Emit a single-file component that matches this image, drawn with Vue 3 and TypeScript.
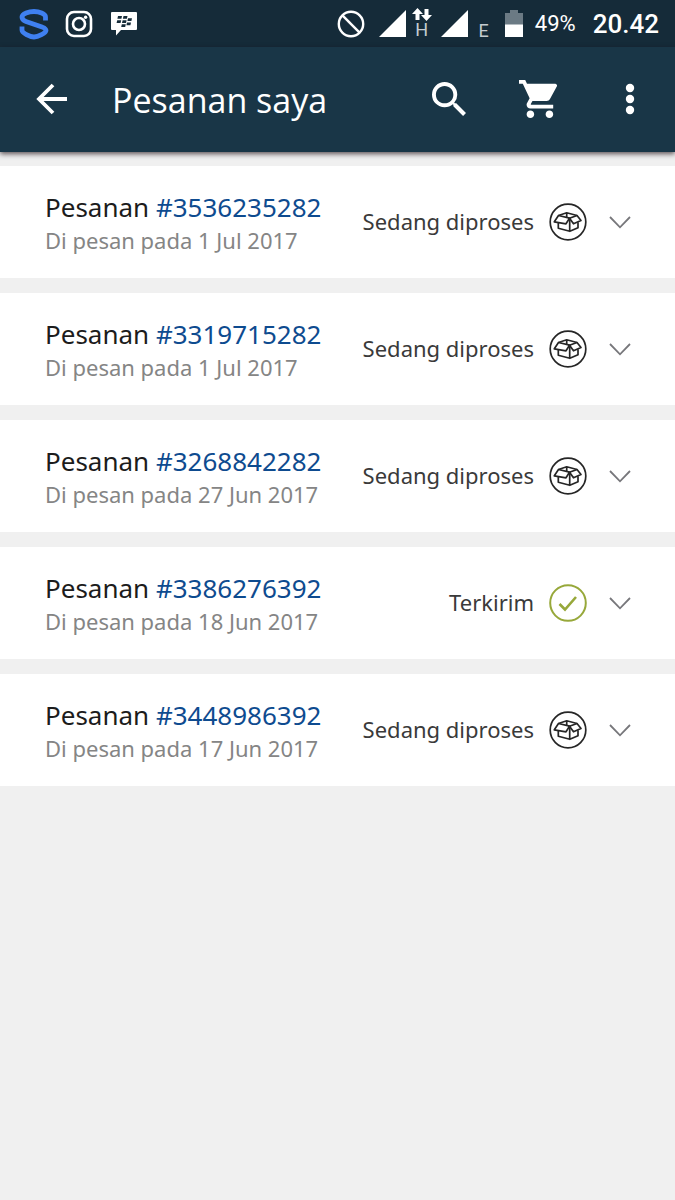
<script setup lang="ts">
import { ref } from 'vue'

interface Order {
  id: string
  date: string
  status: string
  delivered: boolean
}

const orders: Order[] = [
  { id: '3536235282', date: '1 Jul 2017', status: 'Sedang diproses', delivered: false },
  { id: '3319715282', date: '1 Jul 2017', status: 'Sedang diproses', delivered: false },
  { id: '3268842282', date: '27 Jun 2017', status: 'Sedang diproses', delivered: false },
  { id: '3386276392', date: '18 Jun 2017', status: 'Terkirim', delivered: true },
  { id: '3448986392', date: '17 Jun 2017', status: 'Sedang diproses', delivered: false },
]

const expanded = ref<string | null>(null)

function toggle(id: string): void {
  expanded.value = expanded.value === id ? null : id
}
</script>

<template>
  <div class="screen">
    <div class="statusbar">
      <div class="notifications">
        <svg width="30" height="32" viewBox="0 0 30 32" fill="none" stroke="#3f80f0" stroke-width="4.8" stroke-linejoin="round">
          <path d="M26.500 12.500V9C26.500 5.500 20 3.500 15 3.500S3 5.500 3 9C3 11.500 4.500 12.500 7 13.500L23 19C25.500 20 27 20.500 27 22.500C27 25 19 29 15 29S3 25 3 22V18.500" />
        </svg>
        <svg width="28" height="28" viewBox="0 0 28 28" fill="none" stroke="#fff" stroke-width="2.6">
          <rect x="2" y="2" width="24" height="24" rx="7" />
          <circle cx="14" cy="14" r="6" />
          <circle cx="20.6" cy="7.2" r="1.7" fill="#fff" stroke="none" />
        </svg>
        <svg width="26" height="24" viewBox="0 0 26 24">
          <path fill="#fff" d="M1 0H25Q26 0 26 1V17Q26 18 25 18H10L5 23.500V18H1Q0 18 0 17V1Q0 0 1 0Z" />
          <g fill="#152b39">
            <path d="M7 4h4l-.6 2.700h-4zM12.500 4h4l-.6 2.700h-4zM6.200 8.300h4l-.6 2.700h-4zM11.600 8.300h4l-.6 2.700h-4zM17 6.200h4l-.6 2.700h-4zM16 10.500h4l-.6 2.700h-4zM10.800 12.300h4l-.6 2.700h-4z" />
          </g>
        </svg>
      </div>
      <div class="system">
        <svg width="28" height="28" viewBox="0 0 28 28" fill="none" stroke="#fff" stroke-width="2.400">
          <circle cx="14" cy="14" r="12.200" />
          <path d="M5.400 5.400L22.600 22.600" />
        </svg>
        <svg class="signal" width="27" height="27" viewBox="0 0 27 27"><path fill="#fff" d="M27 0V27H0Z" /></svg>
        <span class="network">
          <svg width="20" height="13" viewBox="0 0 20 13" fill="#fff">
            <path d="M5.500 0L11 6H7.500V12H3.500V6H0Z" />
            <path d="M14.500 13L9 7H12.500V1H16.500V7H20Z" />
          </svg>
          <span class="net-label">H</span>
        </span>
        <svg class="signal second" width="27" height="27" viewBox="0 0 27 27"><path fill="#fff" d="M27 0V27H0Z" /></svg>
        <span class="net-label edge">E</span>
        <svg class="battery" width="18" height="27" viewBox="0 0 18 27">
          <path fill="#6b7a84" d="M5 0H13V3H18V15H0V3H5Z" />
          <path fill="#fff" d="M0 14.500H18V27H0Z" />
        </svg>
        <span class="percent">49%</span>
        <span class="clock">20.42</span>
      </div>
    </div>

    <header class="appbar">
      <button class="icon-btn back" type="button" aria-label="Kembali">
        <svg width="32" height="32" viewBox="0 0 32 32" fill="none" stroke="#fff" stroke-width="3.800">
          <path d="M31 16H4M17 2L3 16L17 30" />
        </svg>
      </button>
      <h1>Pesanan saya</h1>
      <button class="icon-btn search" type="button" aria-label="Cari">
        <svg width="34" height="34" viewBox="3 3 17.500 17.500" fill="#fff">
          <path d="M15.500 14h-.79l-.28-.27A6.471 6.471 0 0 0 16 9.500 6.500 6.500 0 1 0 9.500 16c1.610 0 3.090-.59 4.230-1.570l.27.28v.79l5 4.990L20.490 19l-4.990-5zm-6 0C7.010 14 5 11.990 5 9.500S7.010 5 9.500 5 14 7.010 14 9.500 11.990 14 9.500 14z" />
        </svg>
      </button>
      <button class="icon-btn cart" type="button" aria-label="Keranjang">
        <svg width="38" height="38" viewBox="1 2 20 20" fill="#fff">
          <path d="M7 18c-1.100 0-1.990.9-1.990 2S5.900 22 7 22s2-.9 2-2-.9-2-2-2zM1 2v2h2l3.600 7.590-1.350 2.450c-.16.28-.25.61-.25.960 0 1.100.9 2 2 2h12v-2H7.420c-.14 0-.25-.11-.25-.25l.03-.12.900-1.630h7.450c.75 0 1.410-.41 1.750-1.030l3.580-6.490A1 1 0 0 0 20 4H5.210l-.94-2H1zm16 16c-1.100 0-1.990.9-1.990 2s.89 2 1.990 2 2-.9 2-2-.9-2-2-2z" />
        </svg>
      </button>
      <button class="icon-btn more" type="button" aria-label="Menu lainnya">
        <svg width="10" height="32" viewBox="0 0 10 32" fill="#fff">
          <circle cx="5" cy="5" r="4.200" />
          <circle cx="5" cy="16" r="4.200" />
          <circle cx="5" cy="27" r="4.200" />
        </svg>
      </button>
    </header>

    <main class="orders">
      <article v-for="order in orders" :key="order.id" class="order">
        <div class="info">
          <h2>Pesanan <a href="#">#{{ order.id }}</a></h2>
          <p>Di pesan pada {{ order.date }}</p>
        </div>
        <span class="status">{{ order.status }}</span>
        <svg v-if="order.delivered" class="badge" width="38" height="38" viewBox="0 0 38 38" fill="none" stroke="#97a83a">
          <circle cx="19" cy="19" r="17.800" stroke-width="2" />
          <path d="M10.500 20L16 25.500L27 13" stroke-width="2.600" />
        </svg>
        <svg v-else class="badge" width="38" height="38" viewBox="0 0 38 38" fill="none" stroke="#262626" stroke-width="1.700" stroke-linejoin="round">
          <circle cx="19" cy="19" r="17.800" />
          <path d="M9.500 12.500L20.500 15.200L17 20.800L5.300 18.800Z" />
          <path d="M20.500 15.200L28 12.500L32 17.500L24.500 20.800Z" />
          <path d="M9.500 12.500L17.700 9.800L28 12.500M17.700 10V14" />
          <path d="M9.300 20V25.200L20.800 28.300L29 24.700V19.300M20.700 15.500V28" />
        </svg>
        <button class="toggle" type="button" :aria-label="'Detail pesanan ' + order.id" :aria-expanded="expanded === order.id" @click="toggle(order.id)">
          <svg width="22" height="13" viewBox="0 0 22 13" fill="none" stroke="#77777b" stroke-width="1.800">
            <path d="M1 1L11 11.300L21 1" />
          </svg>
        </button>
      </article>
    </main>
  </div>
</template>

<style>
body {
  background: #f0f0f0;
}
</style>

<style scoped>
.screen {
  min-height: 100vh;
  background: #f0f0f0;
  font-family: "Noto Sans", "Open Sans", sans-serif;
}

.statusbar {
  display: flex;
  justify-content: space-between;
  height: 47px;
  padding: 0 16px 0 19px;
  background: #152b39;
  color: #fff;
  font-family: Roboto, sans-serif;
}

.notifications,
.system {
  display: flex;
  align-items: center;
}

.notifications {
  gap: 16px;
}

.notifications svg:last-child {
  margin-left: 2px;
}

.signal {
  margin-left: 14px;
}

.network {
  display: flex;
  flex-direction: column;
  align-items: center;
  margin-left: 6px;
}

.net-label {
  color: #c4cbd0;
  font-size: 18px;
  line-height: 18px;
}

.signal.second {
  margin-left: 9px;
}

.edge {
  margin: 14px 0 0 11px;
}

.battery {
  margin-left: 16px;
}

.percent {
  margin-left: 12px;
  font-size: 22px;
}

.clock {
  margin-left: 17px;
  font-size: 26px;
  font-weight: 500;
}

.appbar {
  position: relative;
  display: flex;
  align-items: center;
  height: 105px;
  padding: 0 40px 0 36px;
  background: #193647;
  box-shadow: 0 2px 5px rgba(30, 15, 20, 0.7);
}

.icon-btn,
.toggle {
  display: flex;
  flex: none;
  padding: 0;
  border: 0;
  background: none;
  cursor: pointer;
}

.icon-btn {
  padding-bottom: 2px;
}

h1 {
  flex: 1;
  margin: 0 0 0 44px;
  color: #fff;
  font-family: "Open Sans", sans-serif;
  font-size: 34px;
  font-weight: 400;
  line-height: 46px;
}

.cart {
  margin-left: 53px;
}

.more {
  margin-left: 68px;
}

.orders {
  display: flex;
  flex-direction: column;
  gap: 15px;
  padding-top: 14px;
}

.order {
  display: flex;
  align-items: center;
  min-height: 112px;
  padding: 0 44px 0 45px;
  box-sizing: border-box;
  background: #fff;
}

.info {
  flex: 1;
  padding-top: 2px;
}

h2,
p {
  margin: 0;
  font-weight: 400;
  white-space: nowrap;
}

h2 {
  color: #1c1c1c;
  font-size: 26px;
  line-height: 34px;
}

h2 a {
  color: #0e4b8f;
  text-decoration: none;
}

p {
  color: #858585;
  font-size: 22px;
  line-height: 32px;
}

.status {
  padding-bottom: 2px;
  color: #3a3a3a;
  font-size: 22px;
  line-height: 32px;
  white-space: nowrap;
}

.badge {
  flex: none;
  margin-left: 15px;
}

.toggle {
  margin-left: 22px;
}
</style>
